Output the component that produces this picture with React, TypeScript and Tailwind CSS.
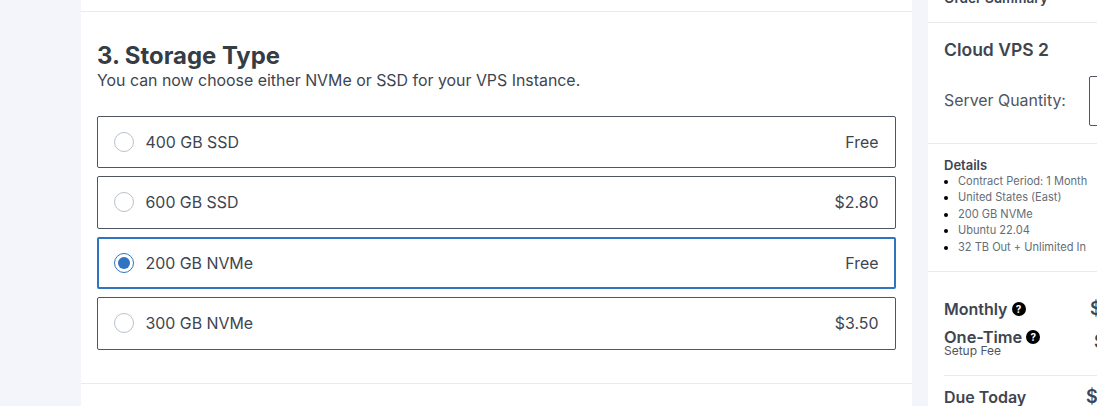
const storageOptions = [
  { label: "400 GB SSD", price: "Free", selected: false, height: "h-[52px]", textOffset: "mt-[2px]" },
  { label: "600 GB SSD", price: "$2.80", selected: false, height: "h-[53px]", textOffset: "mt-px" },
  { label: "200 GB NVMe", price: "Free", selected: true, height: "h-[52px]", textOffset: "mt-[2px]" },
  { label: "300 GB NVMe", price: "$3.50", selected: false, height: "h-[53px]", textOffset: "mt-px" },
];

const details = [
  "Contract Period: 1 Month",
  "United States (East)",
  "200 GB NVMe",
  "Ubuntu 22.04",
  "32 TB Out + Unlimited In",
];

const HelpIcon = () => (
  <span className="flex h-[14px] w-[14px] items-center justify-center rounded-full bg-black text-[10px] font-bold leading-none text-white">
    ?
  </span>
);

const StorageRow = ({ label, price, selected, height, textOffset }: (typeof storageOptions)[number]) => (
  <div
    className={`flex ${height} items-center justify-between rounded-[2px] bg-white pl-4 pr-[16.5px] ${
      selected ? "border-2 border-[#2f74c0]" : "border border-[#4f5661]"
    }`}
  >
    <div className={`flex items-center gap-[11.5px] ${selected ? "-ml-px" : ""}`}>
      {selected ? (
        <span className="flex h-5 w-5 items-center justify-center rounded-full border border-[#2f74c0]">
          <span className="h-3 w-3 rounded-full bg-[#2f74c0]" />
        </span>
      ) : (
        <span className="h-5 w-5 rounded-full border border-[#b8c2cc]" />
      )}
      <span className={`${textOffset} text-[15.9px] text-[#3e4550]`}>{label}</span>
    </div>
    <span className={`${textOffset} text-[15.9px] text-[#3e4550] ${selected ? "-mr-px" : ""}`}>{price}</span>
  </div>
);

export default function App() {
  return (
    <div className="flex h-[406px] w-[1097px] overflow-hidden bg-[#f3f5fa] pl-[81px] font-['Inter',sans-serif]">
      <main className="flex h-full w-[831px] shrink-0 flex-col bg-white">
        <div className="h-3 shrink-0 border-b border-[#e9eaee]" />
        <section className="h-[372px] shrink-0 border-b border-[#e9eaee] px-4 pt-[31px]">
          <h2 className="text-[23.9px] font-bold leading-[25px] text-[#363c44]">3. Storage Type</h2>
          <p className="mt-px text-[15.9px] leading-[24px] text-[#3e4550]">
            You can now choose either NVMe or SSD for your VPS Instance.
          </p>
          <div className="mt-[23px] flex flex-col gap-2">
            {storageOptions.map((option) => (
              <StorageRow key={option.label} {...option} />
            ))}
          </div>
        </section>
      </main>

      <aside className="ml-4 flex h-full w-[230px] shrink-0 flex-col bg-white">
        <div className="flex h-[23px] shrink-0 items-end overflow-hidden border-b border-[#e9eaee] px-4 pb-[14px]">
          <span className="text-[13.6px] font-semibold leading-5 text-[#3e4550]">Order Summary</span>
        </div>

        <div className="h-[121px] shrink-0 border-b border-[#e9eaee] px-4 pt-[15px]">
          <h3 className="text-[17.5px] font-semibold leading-6 text-[#3e4550]">Cloud VPS 2</h3>
          <div className="mt-[14px] flex items-center justify-between">
            <span className="text-[15.9px] text-[#4f5661]">Server Quantity:</span>
            <div className="h-[50px] w-[53px] rounded-[2px] border border-[#4f5661]" />
          </div>
        </div>

        <div className="h-[128px] shrink-0 border-b border-[#e9eaee] px-4 pt-[14px]">
          <h4 className="text-[13px] font-semibold leading-[14px] text-[#3e4550]">Details</h4>
          <ul className="mt-[0.6px] list-disc pl-[14px] text-[11.05px] leading-[16.5px] text-[#666d76] marker:text-black">
            {details.map((item) => (
              <li key={item}>{item}</li>
            ))}
          </ul>
        </div>

        <div className="px-4 pt-[27px]">
          <div className="flex items-center justify-between">
            <div className="flex items-center gap-1">
              <span className="text-base font-semibold leading-5 text-[#3e4550]">Monthly</span>
              <HelpIcon />
            </div>
            <span className="w-[52px] whitespace-nowrap text-lg font-semibold leading-5 text-[#3e4550]">$12.00</span>
          </div>
          <div className="mt-[9px] flex items-start justify-between border-b border-[#e9eaee] pb-[19px]">
            <div>
              <div className="flex items-center gap-1">
                <span className="text-[16.4px] font-semibold leading-[18px] text-[#3e4550]">One-Time</span>
                <HelpIcon />
              </div>
              <p className="text-xs leading-[10px] text-[#4f5661]">Setup Fee</p>
            </div>
            <span className="mt-1 w-[48px] whitespace-nowrap text-lg font-semibold leading-5 text-[#3e4550]">$0.00</span>
          </div>
          <div className="mt-[11px] flex items-center justify-between">
            <span className="text-base font-semibold leading-5 text-[#3e4550]">Due Today</span>
            <span className="w-[56px] whitespace-nowrap text-lg font-semibold leading-5 text-[#3e4550]">$12.00</span>
          </div>
        </div>
      </aside>
    </div>
  );
}
